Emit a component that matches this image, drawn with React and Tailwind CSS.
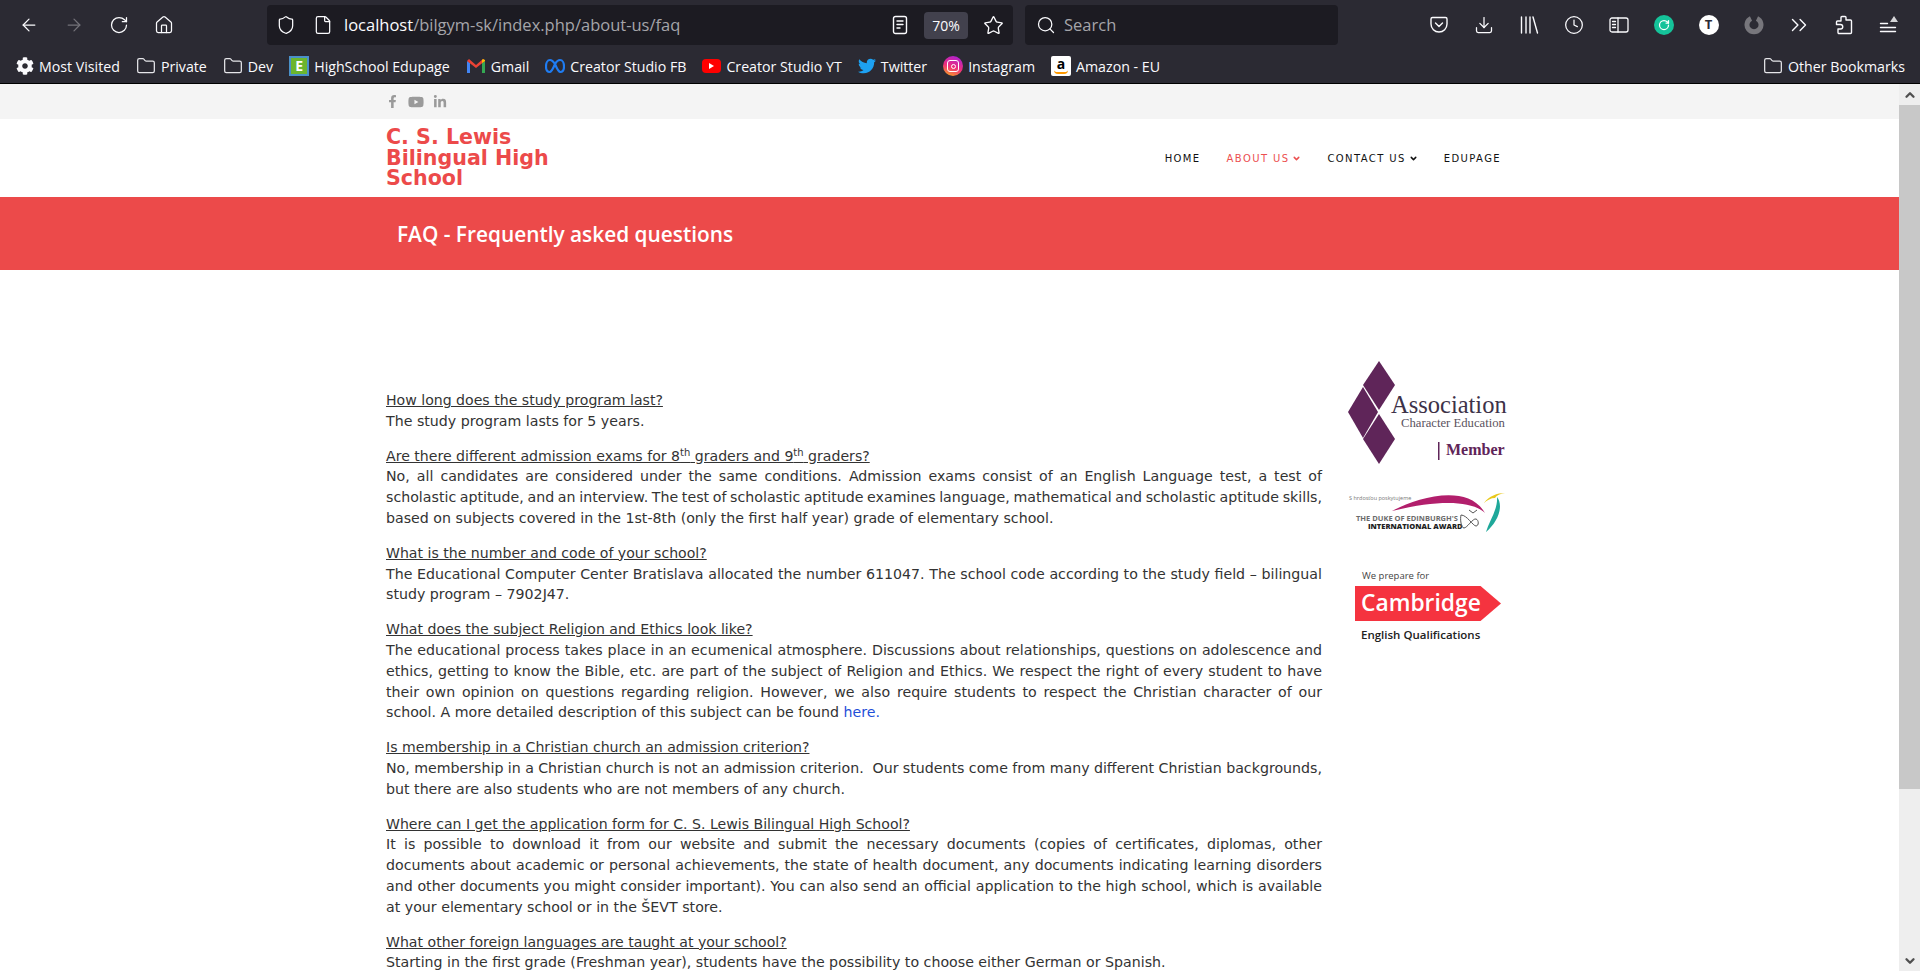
import React from "react";
import {
  ArrowLeft,
  ArrowRight,
  RotateCw,
  Home,
  Shield,
  File,
  Star,
  Search,
  Download,
  Clock,
  Folder,
  ChevronsRight,
  ChevronDown,
  ChevronUp,
} from "lucide-react";
import { FaFacebookF, FaYoutube, FaLinkedinIn, FaTwitter, FaCog } from "react-icons/fa";

const uiFont = "font-['Open_Sans',sans-serif]";

// Small favicons for the bookmarks bar
const EdupageIcon = () => (
  <span className="flex h-5 w-5 items-center justify-center bg-[#4a90c8]">
    <span className="flex h-4 w-4 items-center justify-center bg-[#6cb52d] text-[14px] font-bold leading-none text-white">E</span>
  </span>
);

const GmailIcon = () => (
  <svg width="20" height="16" viewBox="0 0 20 16">
    <path d="M1 15V3l3 2v10z" fill="#4285f4" />
    <path d="M16 15V5l3-2v12z" fill="#34a853" />
    <path d="M1 3l2-2 7 6 7-6 2 2-9 7z" fill="#ea4335" />
    <path d="M16 5l3-2 0-1-2-1-1 1z" fill="#fbbc04" />
  </svg>
);

const MetaIcon = () => (
  <svg width="20" height="16" viewBox="0 0 20 16" fill="none">
    <path d="M10 6C8 3 6.500 2 5 2 2.500 2 1 5 1 8.500 1 11.500 2.300 14 4.500 14 6.500 14 8 11 10 6c2-3.500 3.500-4 5-4 2.500 0 4 3 4 6.500 0 3-1.300 5.500-3.500 5.500C13.500 14 12 11 10 6z" stroke="#1f7cf2" strokeWidth="2.200" />
  </svg>
);

const YoutubeIcon = () => (
  <span className="flex h-[14px] w-[19px] items-center justify-center rounded-[4px] bg-[#f00]">
    <span className="h-0 w-0 border-y-[3px] border-l-[5px] border-y-transparent border-l-white" />
  </span>
);

const InstagramIcon = () => (
  <span className="flex h-5 w-5 items-center justify-center rounded-full bg-[linear-gradient(200deg,#a21ee0,#ef2f7c_55%,#fbb214)]">
    <span className="flex h-[12px] w-[12px] items-center justify-center rounded-[3px] border border-white">
      <span className="h-[5px] w-[5px] rounded-full border border-white" />
    </span>
  </span>
);

const AmazonIcon = () => (
  <span className="relative flex h-5 w-5 justify-center rounded-[2px] bg-white text-[14px] font-bold leading-[15px] text-black">
    a
    <span className="absolute bottom-[2px] left-[3px] h-[4px] w-[14px] rounded-b-full border-b-2 border-[#f90]" />
  </span>
);

const bookmarks = [
  { label: "Most Visited", icon: <FaCog size={18} className="text-[#fbfbfe]" /> },
  { label: "Private", icon: <Folder size={20} strokeWidth={1.5} className="text-[#e6e6ea]" /> },
  { label: "Dev", icon: <Folder size={20} strokeWidth={1.5} className="text-[#e6e6ea]" /> },
  { label: "HighSchool Edupage", icon: <EdupageIcon /> },
  { label: "Gmail", icon: <GmailIcon /> },
  { label: "Creator Studio FB", icon: <MetaIcon /> },
  { label: "Creator Studio YT", icon: <YoutubeIcon /> },
  { label: "Twitter", icon: <FaTwitter size={18} className="text-[#1da1f2]" /> },
  { label: "Instagram", icon: <InstagramIcon /> },
  { label: "Amazon - EU", icon: <AmazonIcon /> },
];

const PocketIcon = () => (
  <svg width="20" height="20" viewBox="0 0 20 20" fill="none" stroke="#fbfbfe" strokeWidth="1.400" strokeLinecap="round" strokeLinejoin="round">
    <path d="M3.500 2.500h13A1.500 1.500 0 0 1 18 4v5a8 8 0 0 1-16 0V4a1.500 1.500 0 0 1 1.500-1.500z" />
    <path d="M6.500 8l3.500 3.500L13.500 8" />
  </svg>
);

const LibraryIcon = () => (
  <svg width="20" height="20" viewBox="0 0 20 20" fill="none" stroke="#fbfbfe" strokeWidth="1.400" strokeLinecap="round">
    <path d="M2.500 2v16M7 2v16M11 2v16M14 2l4.500 16" />
  </svg>
);

const SidebarIcon = () => (
  <svg width="20" height="18" viewBox="0 0 20 18" fill="none" stroke="#fbfbfe" strokeWidth="1.300" strokeLinecap="round">
    <rect x="1" y="2" width="18" height="14" rx="2" />
    <path d="M9 2v14M3.500 5.500h3M3.500 8.500h3M3.500 11.500h3" />
  </svg>
);

const ReaderIcon = () => (
  <svg width="16" height="20" viewBox="0 0 16 20" fill="none" stroke="#fbfbfe" strokeWidth="1.400" strokeLinecap="round">
    <rect x="1.500" y="1.500" width="13" height="17" rx="2" />
    <path d="M5 6h6M5 9.500h6M5 13h3" />
  </svg>
);

const GrammarlyIcon = () => (
  <span className="flex h-5 w-5 items-center justify-center rounded-full bg-[#15c39a]">
    <RotateCw size={12} strokeWidth={2.500} className="text-white" />
  </span>
);

const ProfileIcon = () => (
  <span className="flex h-5 w-5 items-center justify-center rounded-full bg-white text-[13px] font-bold text-[#2b2a33]">T</span>
);

const RingIcon = () => (
  <svg width="20" height="20" viewBox="0 0 20 20" fill="none">
    <path d="M7 3.500a7 7 0 1 0 6 0" stroke="#77767c" strokeWidth="5" />
  </svg>
);

const ExtensionIcon = () => (
  <svg width="20" height="20" viewBox="0 0 20 20" fill="none" stroke="#fbfbfe" strokeWidth="1.400" strokeLinejoin="round">
    <path d="M8 1.500h3a1 1 0 0 1 1 1V5h4.500a1 1 0 0 1 1 1v11.500a1 1 0 0 1-1 1H5a1 1 0 0 1-1-1V14h2.500a2 2 0 0 0 0-4.500H2.500V7a1 1 0 0 1 1-1H7V2.500a1 1 0 0 1 1-1z" />
  </svg>
);

const MenuIcon = () => (
  <svg width="20" height="20" viewBox="0 0 20 20" fill="none" stroke="#fbfbfe" strokeWidth="1.400" strokeLinecap="round">
    <path d="M1.500 8.500h7M1.500 12.500h15M1.500 16.500h15" />
    <path d="M15 1l4 6h-8z" fill="#d5d5d8" stroke="none" />
  </svg>
);

const toolbarRight = [
  <PocketIcon />,
  <Download size={20} strokeWidth={1.500} />,
  <LibraryIcon />,
  <Clock size={20} strokeWidth={1.500} />,
  <SidebarIcon />,
  <GrammarlyIcon />,
  <ProfileIcon />,
  <RingIcon />,
  <ChevronsRight size={26} strokeWidth={1.300} />,
  <ExtensionIcon />,
  <MenuIcon />,
];

const Toolbar = () => (
  <div className={`h-[84px] border-b border-black bg-[#2b2a33] ${uiFont}`}>
    <div className="flex h-[50px] items-center pl-[19px] text-[#fbfbfe]">
      <div className="flex items-center gap-[25px]">
        <ArrowLeft size={20} strokeWidth={1.500} />
        <ArrowRight size={20} strokeWidth={1.500} className="text-[#74737a]" />
        <RotateCw size={20} strokeWidth={1.500} />
        <Home size={20} strokeWidth={1.500} />
      </div>
      <div className="ml-[93px] flex h-[40px] w-[746px] items-center rounded-[4px] bg-[#1c1b22] pl-[9px] pr-[9px]">
        <Shield size={20} strokeWidth={1.500} />
        <File size={20} strokeWidth={1.500} className="ml-[17px]" />
        <span className="ml-[11px] flex-1 text-[16.500px] text-[#a5a5aa]">
          <span className="text-[#fbfbfe]">localhost</span>/bilgym-sk/index.php/about-us/faq
        </span>
        <ReaderIcon />
        <span className="ml-[16px] flex h-[27px] w-[44px] items-center justify-center rounded-[4px] bg-[#42414d] text-[14px]">70%</span>
        <Star size={21} strokeWidth={1.500} className="ml-[15px]" />
      </div>
      <div className="ml-[12px] flex h-[40px] w-[313px] items-center rounded-[4px] bg-[#1c1b22] pl-[11px] text-[16.500px] text-[#a5a5aa]">
        <Search size={20} strokeWidth={1.500} className="text-[#fbfbfe]" />
        <span className="ml-[8px]">Search</span>
      </div>
      <div className="ml-[78px] flex items-center text-[#fbfbfe]">
        {toolbarRight.map((icon, index) => (
          <span key={index} className="flex w-[45px] justify-center">{icon}</span>
        ))}
      </div>
    </div>
    <div className="flex h-[33px] items-center justify-between pl-[16px] pr-[15px] text-[14.200px] text-[#fbfbfe]">
      <div className="flex items-center gap-[16px]">
        {bookmarks.map((item) => (
          <span key={item.label} className="flex items-center gap-[5px]">
            {item.icon}
            {item.label}
          </span>
        ))}
      </div>
      <span className="flex items-center gap-[5px]">
        <Folder size={20} strokeWidth={1.500} className="text-[#e6e6ea]" />
        Other Bookmarks
      </span>
    </div>
  </div>
);

const NavItem = ({ label, active, caret }) => (
  <span className={`flex items-center gap-[3px] ${active ? "text-[#ec5050]" : "text-[#111]"}`}>
    {label}
    {caret && <ChevronDown size={9} strokeWidth={4} />}
  </span>
);

const Header = () => (
  <>
    <div className="h-[35px] bg-[#f4f4f4]">
      <div className="ml-[386px] flex h-full items-center gap-[9px] text-[#9a9a9a]">
        <FaFacebookF size={13} />
        <FaYoutube size={16} />
        <FaLinkedinIn size={14} />
      </div>
    </div>
    <div className="flex h-[78px] items-center justify-between bg-white pl-[386px] pr-[398px]">
      <h1 className="w-[180px] font-['DejaVu_Sans',sans-serif] text-[20.600px] font-bold leading-[20.500px] text-[#ec4a4a]">
        C. S. Lewis Bilingual High School
      </h1>
      <nav className="flex items-center gap-[26px] font-['DejaVu_Sans',sans-serif] text-[10px] tracking-[1.400px]">
        <NavItem label="HOME" />
        <NavItem label="ABOUT US" active caret />
        <NavItem label="CONTACT US" caret />
        <NavItem label="EDUPAGE" />
      </nav>
    </div>
    <div className="flex h-[73px] items-center bg-[#ec4a4a] pl-[397px] pt-[2px]">
      <h2 className={`${uiFont} text-[20.850px] font-semibold text-white`}>FAQ - Frequently asked questions</h2>
    </div>
  </>
);

// Answers are kept line by line so the justified text breaks where the page does
const faqs = [
  {
    q: "How long does the study program last?",
    a: ["The study program lasts for 5 years."],
  },
  {
    q: (
      <>
        Are there different admission exams for 8<sup className="text-[10px]">th</sup>&nbsp;graders and 9<sup className="text-[10px]">th</sup>&nbsp;graders?
      </>
    ),
    a: [
      "No, all candidates are considered under the same conditions. Admission exams consist of an English Language test, a test of",
      "scholastic aptitude, and an interview. The test of scholastic aptitude examines language, mathematical and scholastic aptitude skills,",
      "based on subjects covered in the 1st-8th (only the first half year) grade of elementary school.",
    ],
  },
  {
    q: "What is the number and code of your school?",
    a: [
      "The Educational Computer Center Bratislava allocated the number 611047. The school code according to the study field – bilingual",
      "study program – 7902J47.",
    ],
  },
  {
    q: "What does the subject Religion and Ethics look like?",
    a: [
      "The educational process takes place in an ecumenical atmosphere. Discussions about relationships, questions on adolescence and",
      "ethics, getting to know the Bible, etc. are part of the subject of Religion and Ethics. We respect the right of every student to have",
      "their own opinion on questions regarding religion. However, we also require students to respect the Christian character of our",
      <>
        school. A more detailed description of this subject can be found <a className="text-[#1f4fd8]">here.</a>
      </>,
    ],
  },
  {
    q: "Is membership in a Christian church an admission criterion?",
    a: [
      "No, membership in a Christian church is not an admission criterion.\u00a0 Our students come from many different Christian backgrounds,",
      "but there are also students who are not members of any church.",
    ],
  },
  {
    q: "Where can I get the application form for C. S. Lewis Bilingual High School?",
    a: [
      "It is possible to download it from our website and submit the necessary documents (copies of certificates, diplomas, other",
      "documents about academic or personal achievements, the state of health document, any documents indicating learning disorders",
      "and other documents you might consider important). You can also send an official application to the high school, which is available",
      "at your elementary school or in the ŠEVT store.",
    ],
  },
  {
    q: "What other foreign languages are taught at your school?",
    a: ["Starting in the first grade (Freshman year), students have the possibility to choose either German or Spanish."],
  },
];

const FaqList = () => (
  <div className="flex w-[936px] flex-col gap-[14px] font-['DejaVu_Sans',sans-serif] text-[14.100px] leading-[20.800px] text-[#333]">
    {faqs.map((item, index) => (
      <div key={index}>
        <p className="underline [&_sup]:leading-[0]">{item.q}</p>
        {item.a.map((line, lineIndex) =>
          lineIndex < item.a.length - 1 ? (
            <p key={lineIndex} className="whitespace-nowrap text-[14.200px] [text-align-last:justify] [word-spacing:-1px]">{line}</p>
          ) : (
            <p key={lineIndex} className="whitespace-nowrap text-[14.200px]">{line}</p>
          )
        )}
      </div>
    ))}
  </div>
);

// Partner logos in the right column
const CharacterLogo = () => (
  <svg width="160" height="104" viewBox="0 0 160 104">
    <g fill="#5f2559">
      <path d="M31 0l16 24-16 25-16-25z" />
      <path d="M15 26l15 25-15 26L0 51z" />
      <path d="M31 53l16 25-16 25-16-25z" />
    </g>
    <text x="43" y="52" fontFamily="Liberation Serif, serif" fontSize="24.500" fill="#3d3248">Association</text>
    <text x="53" y="66" fontFamily="Liberation Serif, serif" fontSize="12.700" fill="#5b5360">Character Education</text>
    <rect x="90" y="81" width="1.500" height="18" fill="#5f2559" />
    <text x="98" y="94" fontFamily="Liberation Serif, serif" fontSize="16" fontWeight="700" fill="#5f2559">Member</text>
  </svg>
);

const DukeLogo = () => (
  <svg width="160" height="44" viewBox="0 0 160 44">
    <text x="1" y="9" fontFamily="Open Sans, sans-serif" fontSize="5.500" fill="#777">S hrdosťou poskytujeme</text>
    <path d="M44 20C70 6 120-8 137 22 122 8 85 10 44 20z" fill="#b21f6c" />
    <path d="M136 12c5-7 13-10 21-10-5 1-8 2-10 5-4 0-8 2-11 5z" fill="#e8c91c" />
    <path d="M149 6c7 9 1 25-11 35 3-11 12-22 11-35z" fill="#1fa89a" />
    <text x="8" y="30" fontFamily="Open Sans, sans-serif" fontSize="7.500" fontWeight="700" fill="#6b6b6b">THE DUKE OF EDINBURGH'S</text>
    <text x="20" y="37.500" fontFamily="Open Sans, sans-serif" fontSize="7.500" fontWeight="800" fill="#222">INTERNATIONAL AWARD</text>
    <path d="M113 24c6 0 12 11 15 11s3-6 0-7-9 9-12 9-4-9-3-13zM121 19l4 3 4-3" fill="none" stroke="#555" />
  </svg>
);

const CambridgeLogo = () => (
  <div className={`${uiFont} flex flex-col`}>
    <span className="ml-[7px] text-[9.500px] leading-[13px] text-[#444]">We prepare for</span>
    <div className="mt-[4px] flex h-[35px] w-[146px] items-center bg-[#f5333f] pl-[6px] text-[22.800px] font-semibold leading-none text-white [clip-path:polygon(0_0,86%_0,100%_50%,86%_100%,0_100%)]">
      Cambridge
    </div>
    <span className="ml-[6px] mt-[7px] text-[11.500px] font-semibold leading-[14px] text-[#222]">English Qualifications</span>
  </div>
);

const Sidebar = () => (
  <aside className="ml-[26px] mt-[-29px] flex w-[160px] flex-col">
    <CharacterLogo />
    <div className="mt-[26px]"><DukeLogo /></div>
    <div className="ml-[7px] mt-[34px]"><CambridgeLogo /></div>
  </aside>
);

const Scrollbar = () => (
  <div className="flex w-[21px] flex-col items-center bg-[#eee] text-[#505050]">
    <div className="flex h-[21px] items-center justify-center">
      <ChevronUp size={14} strokeWidth={4} />
    </div>
    <div className="h-[684px] w-full bg-[#c8c8c8]" />
    <div className="mt-auto flex h-[21px] items-center justify-center">
      <ChevronDown size={14} strokeWidth={4} />
    </div>
  </div>
);

export default function App() {
  return (
    <div className="flex h-[971px] flex-col overflow-hidden bg-white">
      <Toolbar />
      <div className="flex min-h-0 flex-1">
        <main className="min-w-0 flex-1 overflow-hidden">
          <Header />
          <div className="flex pl-[386px] pt-[120px]">
            <FaqList />
            <Sidebar />
          </div>
        </main>
        <Scrollbar />
      </div>
    </div>
  );
}
